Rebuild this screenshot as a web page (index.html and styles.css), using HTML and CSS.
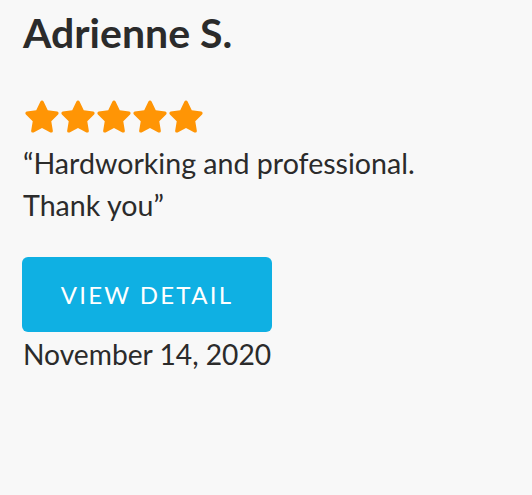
FILE: index.html
```html
<!DOCTYPE html>
<html>
<head>
<meta charset="utf-8">
<link rel="stylesheet" href="styles.css">
</head>
<body>
<div class="card">
  <h1 class="name">Adrienne S.</h1>
  <div class="stars">
    <svg class="star" viewBox="0 0 24 24"><path d="M12 2.6c.4 0 .7.2.9.6l2.4 4.9 5.4.8c.8.1 1.1 1.1.5 1.7l-3.9 3.8.9 5.4c.1.8-.7 1.4-1.4 1l-4.8-2.5-4.8 2.5c-.7.4-1.5-.2-1.4-1l.9-5.4-3.9-3.8c-.6-.6-.3-1.6.5-1.7l5.4-.8 2.4-4.9c.2-.4.5-.6.9-.6z"/></svg>
    <svg class="star" viewBox="0 0 24 24"><path d="M12 2.6c.4 0 .7.2.9.6l2.4 4.9 5.4.8c.8.1 1.1 1.1.5 1.7l-3.9 3.8.9 5.4c.1.8-.7 1.4-1.4 1l-4.8-2.5-4.8 2.5c-.7.4-1.5-.2-1.4-1l.9-5.4-3.9-3.8c-.6-.6-.3-1.6.5-1.7l5.4-.8 2.4-4.9c.2-.4.5-.6.9-.6z"/></svg>
    <svg class="star" viewBox="0 0 24 24"><path d="M12 2.6c.4 0 .7.2.9.6l2.4 4.9 5.4.8c.8.1 1.1 1.1.5 1.7l-3.9 3.8.9 5.4c.1.8-.7 1.4-1.4 1l-4.8-2.5-4.8 2.5c-.7.4-1.5-.2-1.4-1l.9-5.4-3.9-3.8c-.6-.6-.3-1.6.5-1.7l5.4-.8 2.4-4.9c.2-.4.5-.6.9-.6z"/></svg>
    <svg class="star" viewBox="0 0 24 24"><path d="M12 2.6c.4 0 .7.2.9.6l2.4 4.9 5.4.8c.8.1 1.1 1.1.5 1.7l-3.9 3.8.9 5.4c.1.8-.7 1.4-1.4 1l-4.8-2.5-4.8 2.5c-.7.4-1.5-.2-1.4-1l.9-5.4-3.9-3.8c-.6-.6-.3-1.6.5-1.7l5.4-.8 2.4-4.9c.2-.4.5-.6.9-.6z"/></svg>
    <svg class="star" viewBox="0 0 24 24"><path d="M12 2.6c.4 0 .7.2.9.6l2.4 4.9 5.4.8c.8.1 1.1 1.1.5 1.7l-3.9 3.8.9 5.4c.1.8-.7 1.4-1.4 1l-4.8-2.5-4.8 2.5c-.7.4-1.5-.2-1.4-1l.9-5.4-3.9-3.8c-.6-.6-.3-1.6.5-1.7l5.4-.8 2.4-4.9c.2-.4.5-.6.9-.6z"/></svg>
  </div>
  <p class="quote">“Hardworking and professional. Thank you”</p>
  <a class="btn" href="#">VIEW DETAIL</a>
  <p class="date">November 14, 2020</p>
</div>
</body>
</html>
```
FILE: styles.css
```css
html, body {
  margin: 0;
  padding: 0;
  background: #f8f8f8;
}
body {
  font-family: Lato, "Open Sans", sans-serif;
  color: #2b2b2b;
}
.card {
  padding: 9px 22px 0 23px;
  width: 440px;
}
.name {
  margin: 0;
  font-size: 41px;
  font-weight: 700;
  line-height: 48px;
  color: #2b2b2b;
}
.stars {
  display: flex;
  margin-top: 38.5px;
  margin-left: -2.5px;
}
.star {
  width: 42px;
  height: 42px;
  fill: #ff9505;
  display: block;
  margin-right: -6px;
}
.quote {
  margin: 4.5px 0 0;
  font-size: 28.6px;
  line-height: 42px;
  width: 420px;
}
.btn {
  display: flex;
  align-items: center;
  justify-content: center;
  width: 250px;
  height: 75px;
  margin: 31px 0 0 -1px;
  background: #0fb0e3;
  border-radius: 6px;
  color: #fff;
  text-decoration: none;
  font-size: 24px;
  letter-spacing: 2.3px;
}
.date {
  margin: 2px 0 0;
  font-size: 28.2px;
  line-height: 40px;
}
```
